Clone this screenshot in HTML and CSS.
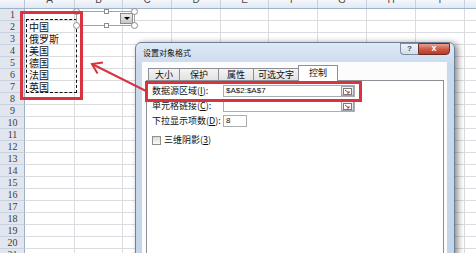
FILE: index.html
```html
<!DOCTYPE html>
<html>
<head>
<meta charset="utf-8">
<link rel="stylesheet" href="styles.css">
</head>
<body>
<div class="sheet">
  <div class="hdr">
    <div class="corner"></div>
    <div class="ch wa"><span>A</span></div><div class="ch wb"><span>B</span></div><div class="ch w"><span>C</span></div><div class="ch w"><span>D</span></div><div class="ch wb"><span>E</span></div><div class="ch w"><span>F</span></div><div class="ch w"><span>G</span></div><div class="ch w"><span>H</span></div><div class="ch w"><span>I</span></div><div class="ch w"><span>J</span></div>
  </div>
  <div class="r"><div class="rh">1</div><div class="c wa"></div><div class="c wb"></div><div class="c w"></div><div class="c w"></div><div class="c wb"></div><div class="c w"></div><div class="c w"></div><div class="c w"></div><div class="c w"></div><div class="c w"></div></div>
  <div class="r"><div class="rh">2</div><div class="c wa t">中国</div><div class="c wb"></div><div class="c w"></div><div class="c w"></div><div class="c wb"></div><div class="c w"></div><div class="c w"></div><div class="c w"></div><div class="c w"></div><div class="c w"></div></div>
  <div class="r"><div class="rh">3</div><div class="c wa t">俄罗斯</div><div class="c wb"></div><div class="c w"></div><div class="c w"></div><div class="c wb"></div><div class="c w"></div><div class="c w"></div><div class="c w"></div><div class="c w"></div><div class="c w"></div></div>
  <div class="r"><div class="rh">4</div><div class="c wa t">美国</div><div class="c wb"></div><div class="c w"></div><div class="c w"></div><div class="c wb"></div><div class="c w"></div><div class="c w"></div><div class="c w"></div><div class="c w"></div><div class="c w"></div></div>
  <div class="r"><div class="rh">5</div><div class="c wa t">德国</div><div class="c wb"></div><div class="c w"></div><div class="c w"></div><div class="c wb"></div><div class="c w"></div><div class="c w"></div><div class="c w"></div><div class="c w"></div><div class="c w"></div></div>
  <div class="r"><div class="rh">6</div><div class="c wa t">法国</div><div class="c wb"></div><div class="c w"></div><div class="c w"></div><div class="c wb"></div><div class="c w"></div><div class="c w"></div><div class="c w"></div><div class="c w"></div><div class="c w"></div></div>
  <div class="r"><div class="rh">7</div><div class="c wa t">英国</div><div class="c wb"></div><div class="c w"></div><div class="c w"></div><div class="c wb"></div><div class="c w"></div><div class="c w"></div><div class="c w"></div><div class="c w"></div><div class="c w"></div></div>
  <div class="r"><div class="rh">8</div><div class="c wa"></div><div class="c wb"></div><div class="c w"></div><div class="c w"></div><div class="c wb"></div><div class="c w"></div><div class="c w"></div><div class="c w"></div><div class="c w"></div><div class="c w"></div></div>
  <div class="r"><div class="rh">9</div><div class="c wa"></div><div class="c wb"></div><div class="c w"></div><div class="c w"></div><div class="c wb"></div><div class="c w"></div><div class="c w"></div><div class="c w"></div><div class="c w"></div><div class="c w"></div></div>
  <div class="r"><div class="rh">10</div><div class="c wa"></div><div class="c wb"></div><div class="c w"></div><div class="c w"></div><div class="c wb"></div><div class="c w"></div><div class="c w"></div><div class="c w"></div><div class="c w"></div><div class="c w"></div></div>
  <div class="r"><div class="rh">11</div><div class="c wa"></div><div class="c wb"></div><div class="c w"></div><div class="c w"></div><div class="c wb"></div><div class="c w"></div><div class="c w"></div><div class="c w"></div><div class="c w"></div><div class="c w"></div></div>
  <div class="r"><div class="rh">12</div><div class="c wa"></div><div class="c wb"></div><div class="c w"></div><div class="c w"></div><div class="c wb"></div><div class="c w"></div><div class="c w"></div><div class="c w"></div><div class="c w"></div><div class="c w"></div></div>
  <div class="r"><div class="rh">13</div><div class="c wa"></div><div class="c wb"></div><div class="c w"></div><div class="c w"></div><div class="c wb"></div><div class="c w"></div><div class="c w"></div><div class="c w"></div><div class="c w"></div><div class="c w"></div></div>
  <div class="r"><div class="rh">14</div><div class="c wa"></div><div class="c wb"></div><div class="c w"></div><div class="c w"></div><div class="c wb"></div><div class="c w"></div><div class="c w"></div><div class="c w"></div><div class="c w"></div><div class="c w"></div></div>
  <div class="r"><div class="rh">15</div><div class="c wa"></div><div class="c wb"></div><div class="c w"></div><div class="c w"></div><div class="c wb"></div><div class="c w"></div><div class="c w"></div><div class="c w"></div><div class="c w"></div><div class="c w"></div></div>
  <div class="r"><div class="rh">16</div><div class="c wa"></div><div class="c wb"></div><div class="c w"></div><div class="c w"></div><div class="c wb"></div><div class="c w"></div><div class="c w"></div><div class="c w"></div><div class="c w"></div><div class="c w"></div></div>
  <div class="r"><div class="rh">17</div><div class="c wa"></div><div class="c wb"></div><div class="c w"></div><div class="c w"></div><div class="c wb"></div><div class="c w"></div><div class="c w"></div><div class="c w"></div><div class="c w"></div><div class="c w"></div></div>
  <div class="r"><div class="rh">18</div><div class="c wa"></div><div class="c wb"></div><div class="c w"></div><div class="c w"></div><div class="c wb"></div><div class="c w"></div><div class="c w"></div><div class="c w"></div><div class="c w"></div><div class="c w"></div></div>
  <div class="r"><div class="rh">19</div><div class="c wa"></div><div class="c wb"></div><div class="c w"></div><div class="c w"></div><div class="c wb"></div><div class="c w"></div><div class="c w"></div><div class="c w"></div><div class="c w"></div><div class="c w"></div></div>
  <div class="r"><div class="rh">20</div><div class="c wa"></div><div class="c wb"></div><div class="c w"></div><div class="c w"></div><div class="c wb"></div><div class="c w"></div><div class="c w"></div><div class="c w"></div><div class="c w"></div><div class="c w"></div></div>
  <div class="r"><div class="rh">21</div><div class="c wa"></div><div class="c wb"></div><div class="c w"></div><div class="c w"></div><div class="c wb"></div><div class="c w"></div><div class="c w"></div><div class="c w"></div><div class="c w"></div><div class="c w"></div></div>
</div>

<div class="ants"></div>

<div class="combo">
  <div class="dd"><i class="tri"></i></div>
  <i class="hc h-tl"></i><i class="hc h-tr"></i><i class="hc h-bl"></i><i class="hc h-br"></i>
  <i class="hs h-tm"></i><i class="hs h-bm"></i>
</div>

<div class="hl hl1"></div>

<div class="dlg">
  <div class="tb">
    <div class="title">设置对象格式</div>
    <div class="btns">
      <div class="help">?</div>
      <div class="close">x</div>
    </div>
  </div>
  <div class="client">
    <div class="tabs">
      <div class="tab t1">大小</div>
      <div class="tab t2">保护</div>
      <div class="tab t3">属性</div>
      <div class="tab t4">可选文字</div>
      <div class="tab t5 sel">控制</div>
    </div>
    <div class="panel">
      <div class="frow">
        <div class="lbl">数据源区域(<u>I</u>):</div>
        <div class="inp wide"><span class="val">$A$2:$A$7</span><span class="ref"><svg width="9" height="7" viewBox="0 0 9 7"><rect x="0.5" y="0.5" width="8" height="6" fill="#fff" stroke="#7a7a7a"/><path d="M2 2 L6 5 M6 3 L6 5 L4 5" stroke="#c0392b" fill="none"/></svg></span></div>
      </div>
      <div class="frow">
        <div class="lbl">单元格链接(<u>C</u>):</div>
        <div class="inp wide"><span class="val"></span><span class="ref"><svg width="9" height="7" viewBox="0 0 9 7"><rect x="0.5" y="0.5" width="8" height="6" fill="#fff" stroke="#7a7a7a"/><path d="M2 2 L6 5 M6 3 L6 5 L4 5" stroke="#c0392b" fill="none"/></svg></span></div>
      </div>
      <div class="frow">
        <div class="lbl">下拉显示项数(<u>D</u>):</div>
        <div class="inp small"><span class="val">8</span></div>
      </div>
      <div class="crow">
        <div class="cb"></div>
        <div class="clbl">三维阴影(<u>3</u>)</div>
      </div>
    </div>
  </div>
</div>

<div class="hl hl2"></div>

<svg class="arrow" width="476" height="253" viewBox="0 0 476 253">
  <path d="M146 91 L92 64" stroke="#d9333f" stroke-width="2" fill="none"/>
  <path d="M103 62.5 L92 64 L97.5 73.5" stroke="#d9333f" stroke-width="2" fill="none" stroke-linejoin="miter"/>
</svg>
</body>
</html>
```

FILE: styles.css
```css
html, body {
  margin: 0;
  padding: 0;
}
body {
  width: 476px;
  height: 253px;
  overflow: hidden;
  position: relative;
  background: #fff;
  font-family: "Liberation Sans", "Noto Sans CJK SC", sans-serif;
  color: #222;
}

/* ---------- spreadsheet ---------- */
.sheet {
  display: flex;
  flex-direction: column;
}
.hdr, .r {
  display: flex;
  flex: none;
}
.hdr {
  height: 9px;
  overflow: hidden;
  background: linear-gradient(#f4f7fb, #e3e9f2);
  border-bottom: 1px solid #9eb3cc;
  box-sizing: border-box;
}
.corner {
  width: 25px;
  flex: none;
  border-right: 1px solid #b7c5d8;
  box-sizing: border-box;
}
.ch {
  flex: none;
  border-right: 1px solid #c6d2e2;
  box-sizing: border-box;
  text-align: center;
  font-size: 10px;
  color: #4a4a4a;
}
.ch span {
  display: block;
  line-height: 12px;
  margin-top: -6px;
}
.wa { width: 50px; }
.wb { width: 48px; }
.w { width: 49px; }

.r { height: 12px; }
.rh {
  width: 25px;
  flex: none;
  box-sizing: border-box;
  background: #e2e7ef;
  border-right: 1px solid #9eb0c8;
  border-bottom: 1px solid #c8d2df;
  text-align: center;
  padding-left: 1px;
  font-family: "Liberation Serif", serif;
  font-size: 10px;
  line-height: 11px;
  color: #3c3c3c;
}
.c {
  flex: none;
  height: 12px;
  box-sizing: border-box;
  border-right: 1px solid #dadcdf;
  border-bottom: 1px solid #dadcdf;
}
.t {
  font-family: "Noto Sans CJK SC", sans-serif;
  font-size: 10px;
  line-height: 11px;
  padding-left: 4px;
  color: #111;
  white-space: nowrap;
}

/* marching ants around A2:A7 */
.ants {
  position: absolute;
  left: 26px;
  top: 19px;
  width: 51px;
  height: 74px;
  border: 1px dashed #111;
  box-sizing: border-box;
}

/* combo box control with handles */
.combo {
  position: absolute;
  left: 76px;
  top: 11px;
  width: 59px;
  height: 15px;
  box-sizing: border-box;
  border: 1px solid #a4a4a4;
  background: #fff;
  display: flex;
  justify-content: flex-end;
  align-items: center;
  padding-right: 1px;
}
.dd {
  width: 13px;
  height: 11px;
  box-sizing: border-box;
  border: 1px solid #8a8a8a;
  background: linear-gradient(#ededed, #c6c6c6);
  display: flex;
  align-items: center;
  justify-content: center;
}
.tri {
  width: 0;
  height: 0;
  border-left: 3px solid transparent;
  border-right: 3px solid transparent;
  border-top: 3px solid #000;
}
.hc, .hs {
  position: absolute;
  box-sizing: border-box;
  background: #fff;
  border: 1px solid #8d8d8d;
}
.hc {
  width: 7px;
  height: 7px;
  border-radius: 50%;
}
.hs {
  width: 5px;
  height: 5px;
}
.h-tl { left: -4px; top: -4px; }
.h-tr { right: -4px; top: -4px; }
.h-bl { left: -4px; bottom: -4px; }
.h-br { right: -4px; bottom: -4px; }
.h-tm { left: 27px; top: -3px; }
.h-bm { left: 27px; bottom: -3px; }

/* red highlight frames */
.hl {
  position: absolute;
  border: 3px solid #d9333f;
  box-sizing: border-box;
}
.hl1 {
  left: 20px;
  top: 11px;
  width: 63px;
  height: 89px;
}
.hl2 {
  left: 145px;
  top: 81px;
  width: 217px;
  height: 21px;
}

.arrow {
  position: absolute;
  left: 0;
  top: 0;
}

/* ---------- dialog ---------- */
.dlg {
  position: absolute;
  left: 135px;
  top: 42px;
  width: 320px;
  height: 230px;
  box-sizing: border-box;
  border: 1px solid #6f8196;
  border-radius: 6px 6px 0 0;
  background: linear-gradient(#dfe9f5, #cadaee 22px, #c3d5ea);
  box-shadow: 3px 1px 6px rgba(0, 0, 0, 0.45);
  display: flex;
  flex-direction: column;
}
.tb {
  height: 19px;
  flex: none;
  display: flex;
  align-items: flex-start;
  padding: 0 4px 0 7px;
}
.title {
  font-family: "Noto Sans CJK SC", sans-serif;
  font-size: 8px;
  line-height: 10px;
  padding-top: 5px;
  color: #111;
}
.btns {
  margin-left: auto;
  display: flex;
}
.help {
  width: 18px;
  height: 12px;
  box-sizing: border-box;
  border: 1px solid #7b8ba0;
  border-right: none;
  border-radius: 0 0 0 4px;
  background: linear-gradient(#f0f4fa, #d3deec);
  font-size: 8px;
  line-height: 10px;
  text-align: center;
  color: #3a4a5e;
  font-weight: bold;
}
.close {
  width: 32px;
  height: 12px;
  box-sizing: border-box;
  border: 1px solid #6b2d24;
  border-radius: 0 0 4px 0;
  background: linear-gradient(#e6a192, #cf5c48 50%, #b83a25);
  font-size: 9px;
  line-height: 9px;
  text-align: center;
  color: #fff;
  font-weight: bold;
}
.client {
  flex: 1;
  margin: 0 7px 0 6px;
  background: #fcfcfc;
  padding-top: 3px;
  display: flex;
  flex-direction: column;
}
.tabs {
  display: flex;
  align-items: flex-start;
  height: 16px;
  margin-bottom: -1px;
  padding-left: 6px;
  position: relative;
  z-index: 1;
}
.tab {
  height: 12px;
  margin-top: 3px;
  margin-right: -1px;
  box-sizing: border-box;
  border: 1px solid #8c8f96;
  border-bottom: none;
  background: linear-gradient(#f4f4f4, #e2e2e2);
  font-family: "Noto Sans CJK SC", sans-serif;
  font-size: 9px;
  line-height: 11px;
  text-align: center;
  color: #111;
}
.t1 { width: 32px; }
.t2 { width: 40px; }
.t3 { width: 36px; }
.t4 { width: 46px; }
.t5 { width: 40px; }
.tab.sel {
  height: 16px;
  margin-top: 0;
  background: #fff;
  line-height: 14px;
}
.panel {
  flex: 1;
  margin: 0 3px 0 4px;
  border: 1px solid #8c8f96;
  background: #fff;
  padding: 4px 0 0 5px;
  display: flex;
  flex-direction: column;
}
.frow {
  display: flex;
  align-items: center;
  height: 12px;
  margin-bottom: 3px;
}
.lbl {
  width: 71px;
  flex: none;
  font-family: "Noto Sans CJK SC", sans-serif;
  font-size: 9px;
  line-height: 12px;
  white-space: nowrap;
  color: #111;
}
.inp {
  height: 12px;
  box-sizing: border-box;
  border: 1px solid #abadb3;
  background: #fff;
  display: flex;
  align-items: center;
  padding-left: 2px;
}
.inp.wide { width: 132px; }
.inp.small { width: 24px; }
.val {
  font-family: "Liberation Sans", sans-serif;
  font-size: 8px;
  line-height: 10px;
  color: #111;
}
.ref {
  margin-left: auto;
  width: 13px;
  height: 10px;
  box-sizing: border-box;
  border: 1px solid #9aa3ad;
  background: linear-gradient(#f4f4f4, #d9dde2);
  display: flex;
  align-items: center;
  justify-content: center;
}
.crow {
  display: flex;
  align-items: center;
  height: 14px;
  margin-top: 3px;
}
.cb {
  width: 9px;
  height: 9px;
  box-sizing: border-box;
  border: 1px solid #8f8f8f;
  background: linear-gradient(#dadada, #fbfbfb);
  margin-right: 3px;
}
.clbl {
  font-family: "Noto Sans CJK SC", sans-serif;
  font-size: 9px;
  line-height: 12px;
  color: #111;
}
```
